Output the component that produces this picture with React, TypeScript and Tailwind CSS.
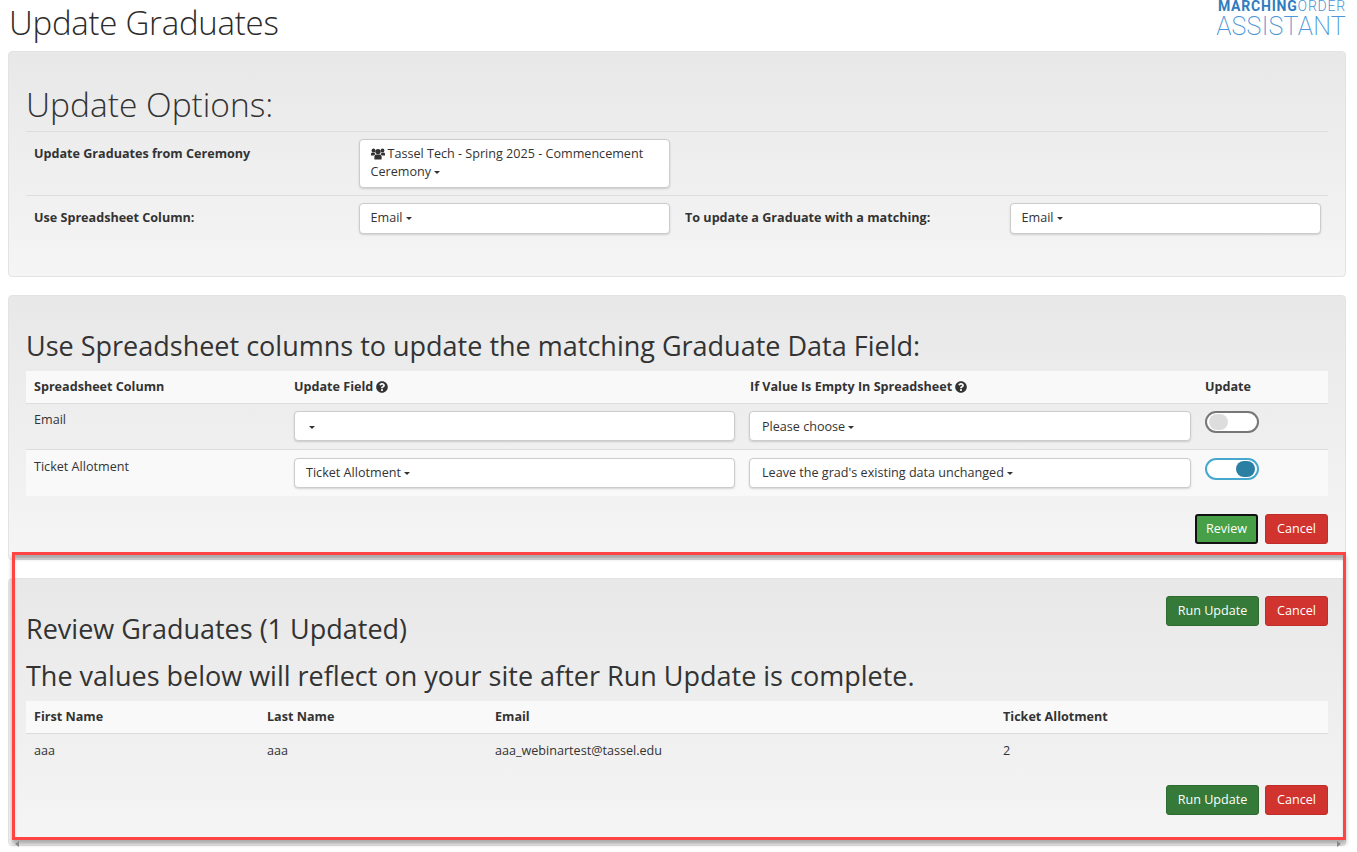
import { FaQuestionCircle } from 'react-icons/fa';

function Caret() {
  return <span className="inline-block ml-[3px] align-middle w-0 h-0 border-x-[3.5px] border-x-transparent border-t-[3.5px] border-t-[#333]" />;
}

function UsersIcon() {
  return (
    <svg viewBox="0 0 14 12" className="inline w-[14px] h-[12px] mr-[3px] mb-[2px] fill-[#333]">
      <circle cx="7" cy="3.6" r="2.7" />
      <circle cx="2.5" cy="2.4" r="1.9" />
      <circle cx="11.5" cy="2.4" r="1.9" />
      <path d="M3.4 11.6V8.6C3.4 7.2 4.6 6.6 7 6.6S10.6 7.2 10.6 8.6V11.6Z" />
      <path d="M0 7.6V5.8C0 4.9.9 4.6 2.5 4.6 3 4.6 3.4 4.7 3.7 4.8 3.8 5.5 4.1 6 4.6 6.4 3.4 6.7 2.8 7.2 2.7 7.6Z" />
      <path d="M14 7.6V5.8C14 4.9 13.1 4.6 11.5 4.6 11 4.6 10.6 4.7 10.3 4.8 10.2 5.5 9.9 6 9.4 6.4 10.6 6.7 11.2 7.2 11.3 7.6Z" />
    </svg>
  );
}

function SelectBox({ children, className = '' }: { children?: React.ReactNode; className?: string }) {
  return (
    <div className={`bg-white border border-[#ccc] rounded-[4px] px-[11px] text-[12.6px] leading-[18px] text-[#333] shadow-[0_1px_2px_rgba(0,0,0,0.15)] ${className}`}>
      {children}
      <Caret />
    </div>
  );
}

function Panel({ className = '', children }: { className?: string; children: React.ReactNode }) {
  return (
    <div className={`border border-[#e3e3e3] rounded-[4px] bg-gradient-to-b from-[#e8e8e8] to-[#f5f5f5] px-[17px] ${className}`}>
      {children}
    </div>
  );
}

function GreenButton({ label }: { label: string }) {
  return (
    <button className="h-[30px] w-[93px] rounded-[3px] bg-[#357a38] border border-[#2e6b31] text-white text-[12.6px]">
      {label}
    </button>
  );
}

function CancelButton() {
  return (
    <button className="h-[30px] w-[63px] rounded-[3px] bg-[#d1332e] border border-[#c02c28] text-white text-[12.6px]">
      Cancel
    </button>
  );
}

function Toggle({ on }: { on: boolean }) {
  return (
    <div className={`w-[54px] h-[22px] rounded-full bg-white border-2 flex items-center px-[2px] ${on ? 'border-[#46a8cf] justify-end' : 'border-[#777] justify-start'}`}>
      <div className={`w-[19px] h-[16px] rounded-full ${on ? 'bg-[#2a7fa3]' : 'bg-[#ddd]'}`} />
    </div>
  );
}

const fieldCols = 'grid grid-cols-[260px_456px_456px_130px]';
const reviewCols = 'grid grid-cols-[233px_228px_508px_333px]';

export default function App() {
  return (
    <div className="relative w-[1357px] h-[852px] overflow-hidden bg-white text-[#333] font-['Open_Sans',sans-serif] text-[12.6px]">
      <header className="flex justify-between h-[51px] pl-[9px] pr-[11px]">
        <h1 className="text-[33px] leading-[46px] font-light text-[#2b2b2b] tracking-[-0.25px]">Update Graduates</h1>
        <div className="text-right font-['Roboto',sans-serif] text-[#4a96d6]">
          <div className="text-[14px] leading-[13px] tracking-[0.8px]">
            <span className="font-bold text-[#2f7cc0]">MARCHING</span>
            <span className="font-light">ORDER</span>
          </div>
          <div className="text-[25px] leading-[27px] font-extralight tracking-[0.25px]">ASSISTANT</div>
        </div>
      </header>

      <div className="ml-[8px] w-[1338px] flex flex-col gap-[18px]">
        <Panel className="h-[226px] pt-[33px]">
          <h2 className="text-[33.5px] leading-[38px] font-light text-[#333]">Update Options:</h2>
          <div className="mt-[8px] border-t border-[#ddd] grid grid-cols-4 pt-[7px] pb-[7px]">
            <div className="px-2 pt-[6px] font-bold leading-[18px]">Update Graduates from Ceremony</div>
            <div className="px-[7px]">
              <SelectBox className="pt-[5px] pb-[6px]">
                <UsersIcon />
                Tassel Tech - Spring 2025 - Commencement Ceremony
              </SelectBox>
            </div>
          </div>
          <div className="border-t border-[#ddd] grid grid-cols-4 pt-[7px]">
            <div className="px-2 pt-[6px] font-bold leading-[18px]">Use Spreadsheet Column:</div>
            <div className="px-[7px]"><SelectBox className="h-[31px] py-[5px]">Email</SelectBox></div>
            <div className="px-2 pt-[6px] font-bold leading-[18px]">To update a Graduate with a matching:</div>
            <div className="px-[7px]"><SelectBox className="h-[31px] py-[5px]">Email</SelectBox></div>
          </div>
        </Panel>

        <Panel className="h-[265px] pt-[34px]">
          <h3 className="text-[27px] leading-[32px] text-[#333]">Use Spreadsheet columns to update the matching Graduate Data Field:</h3>
          <div className={`${fieldCols} mt-[9px] h-[33px] items-center bg-[#f9f9f9] border-b border-[#ddd] font-bold`}>
            <div className="px-2">Spreadsheet Column</div>
            <div className="px-2 flex items-center gap-[3px]">Update Field <FaQuestionCircle className="text-[12px]" /></div>
            <div className="px-2 flex items-center gap-[3px]">If Value Is Empty In Spreadsheet <FaQuestionCircle className="text-[12px]" /></div>
            <div className="px-[7px]">Update</div>
          </div>
          <div className={`${fieldCols} h-[46px] pt-[7px] border-b border-[#ddd]`}>
            <div className="px-2">Email</div>
            <div className="pl-2 pr-[7px]"><SelectBox className="h-[30px] py-[6px]" /></div>
            <div className="px-[7px]"><SelectBox className="h-[30px] py-[6px] pl-[12px]">Please choose</SelectBox></div>
            <div className="px-[7px]"><Toggle on={false} /></div>
          </div>
          <div className={`${fieldCols} h-[46px] pt-[8px] bg-[#f9f9f9]`}>
            <div className="px-2">Ticket Allotment</div>
            <div className="pl-2 pr-[7px]"><SelectBox className="h-[30px] py-[5px]">Ticket Allotment</SelectBox></div>
            <div className="px-[7px]"><SelectBox className="h-[30px] py-[5px] pl-[12px]">Leave the grad's existing data unchanged</SelectBox></div>
            <div className="px-[7px]"><Toggle on /></div>
          </div>
          <div className="flex justify-end gap-[7px] mt-[18px]">
            <button className="h-[30px] w-[63px] rounded-[3px] bg-[#47a047] border-2 border-[#111] text-white text-[12.6px]">Review</button>
            <CancelButton />
          </div>
        </Panel>

        <Panel className="h-[268px] pt-[17px]">
          <div className="flex justify-end gap-[6px] h-0">
            <GreenButton label="Run Update" />
            <CancelButton />
          </div>
          <h3 className="text-[27px] leading-[32px] text-[#333] pt-[17px] box-content">Review Graduates (1 Updated)</h3>
          <h3 className="text-[27px] leading-[32px] text-[#333] mt-[15px]">The values below will reflect on your site after Run Update is complete.</h3>
          <div className={`${reviewCols} mt-[9px] h-[33px] items-center bg-[#f9f9f9] border-b border-[#ddd] font-bold`}>
            <div className="px-2">First Name</div>
            <div className="px-2">Last Name</div>
            <div className="px-2">Email</div>
            <div className="px-2">Ticket Allotment</div>
          </div>
          <div className={`${reviewCols} h-[34px] items-center`}>
            <div className="px-2">aaa</div>
            <div className="px-2">aaa</div>
            <div className="px-2">aaa_webinartest@tassel.edu</div>
            <div className="px-2">2</div>
          </div>
          <div className="flex justify-end gap-[6px] mt-[17px]">
            <GreenButton label="Run Update" />
            <CancelButton />
          </div>
        </Panel>
      </div>

      {/* red highlight drawn over the review panel */}
      <div className="absolute left-[12px] top-[552px] w-[1334px] h-[288px] border-[3px] border-[#ff4444] pointer-events-none shadow-[0_4px_4px_rgba(0,0,0,0.3),inset_0_5px_3px_-1px_rgba(0,0,0,0.3)]" />

      {/* scrollbar arrows peeking out below the highlight */}
      <div className="absolute left-[15px] top-[841px] w-0 h-0 border-y-[3px] border-y-transparent border-r-[4px] border-r-[#888]" />
      <div className="absolute left-[1337px] top-[841px] w-0 h-0 border-y-[3px] border-y-transparent border-l-[4px] border-l-[#888]" />
    </div>
  );
}
